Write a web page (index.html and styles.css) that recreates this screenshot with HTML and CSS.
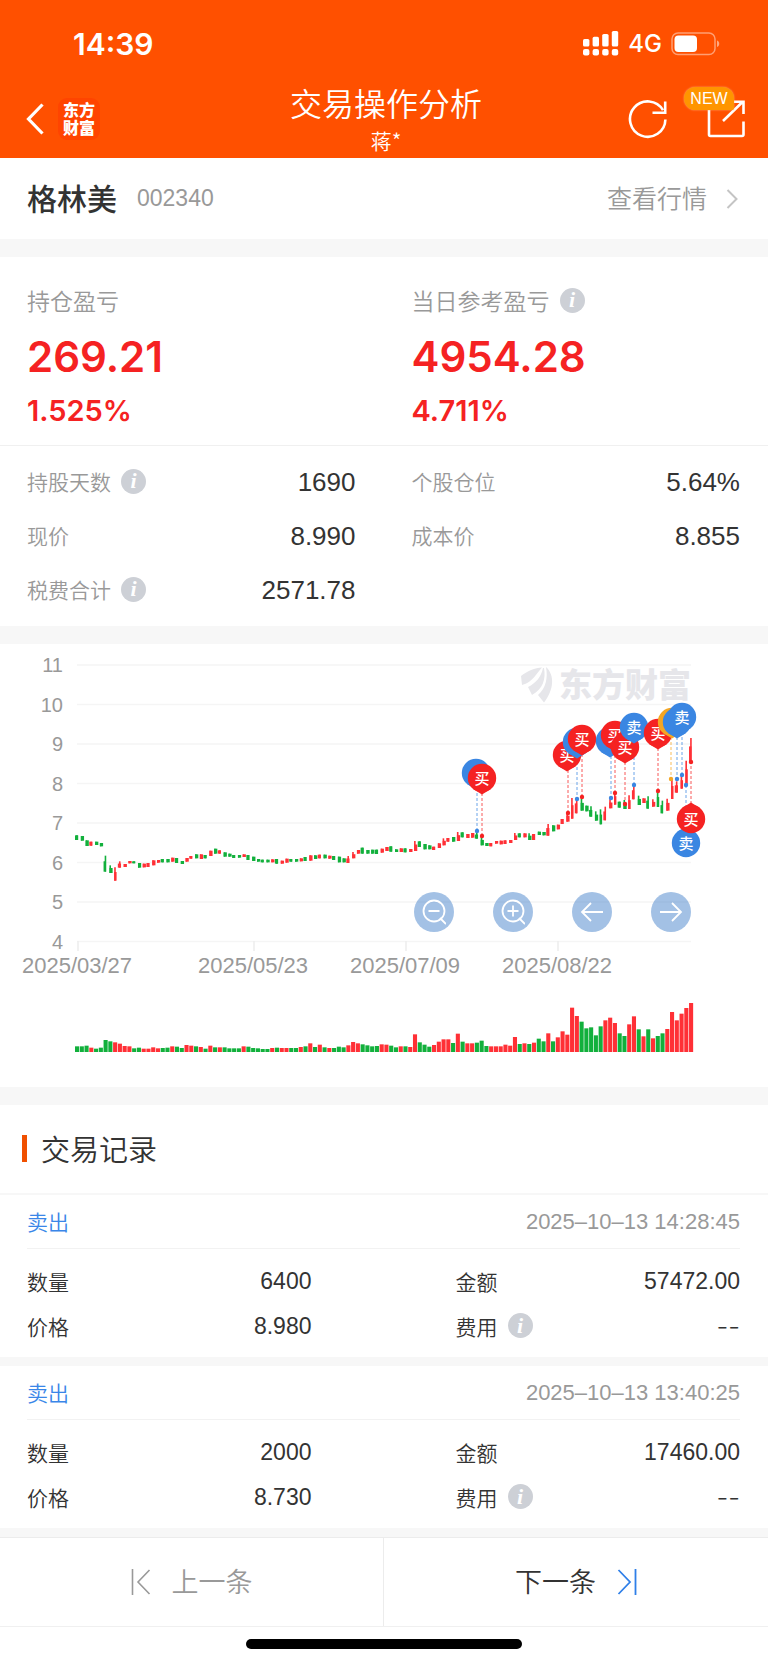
FILE: index.html
```html
<!DOCTYPE html>
<html lang="zh-CN">
<head>
<meta charset="utf-8">
<meta name="viewport" content="width=device-width, initial-scale=1">
<title>交易操作分析</title>
<link rel="stylesheet" href="styles.css">
</head>
<body>
<header class="header">
  <div class="status">
    <span class="status-time">14:39</span>
    <div class="status-right">
      <svg class="signal" width="36" height="26" viewBox="0 0 36 26" fill="#fff" aria-hidden="true">
        <rect x="0" y="8" width="6.400" height="7.500" rx="1.600"/><rect x="9.600" y="5.800" width="6.400" height="9.700" rx="1.600"/><rect x="19.200" y="3" width="6.400" height="12.500" rx="1.600"/><rect x="28.800" y="0" width="6.400" height="15.500" rx="1.600"/>
        <rect x="0" y="18" width="6.400" height="6.500" rx="2"/><rect x="9.600" y="18" width="6.400" height="6.500" rx="2"/><rect x="19.200" y="18" width="6.400" height="6.500" rx="2"/><rect x="28.800" y="18" width="6.400" height="6.500" rx="2"/>
      </svg>
      <span class="status-net">4G</span>
      <svg width="49" height="24" viewBox="0 0 49 24" aria-hidden="true">
        <rect x="1" y="1" width="43" height="21.500" rx="6" fill="none" stroke="#fff" stroke-opacity=".45" stroke-width="1.500"/>
        <rect x="3.500" y="3.500" width="22.500" height="16.500" rx="4" fill="#fff"/>
        <path d="M46 8.500c3 .8 3 5.700 0 6.500z" fill="#fff" fill-opacity=".5"/>
      </svg>
    </div>
  </div>
  <div class="topbar">
    <div class="topbar-left">
      <button class="icon-btn" type="button" aria-label="返回">
        <svg width="18" height="32" viewBox="0 0 18 32" fill="none" stroke="#fff" stroke-width="3.200"><path d="M16.500 1.500 2.500 16l14 14.500"/></svg>
      </button>
      <div class="brand"><span>东方</span><span>财富</span></div>
    </div>
    <div class="topbar-title">
      <h1>交易操作分析</h1>
      <p>蒋*</p>
    </div>
    <div class="topbar-right">
      <button class="icon-btn" type="button" aria-label="刷新">
        <svg width="40" height="40" viewBox="0 0 40 40" fill="none" stroke="#fff" stroke-width="2.600"><path d="M37.400 20.500A17.700 17.700 0 1 1 35 11.200"/><path d="M37.200 2.500v11.300H24.500"/></svg>
      </button>
      <button class="icon-btn share" type="button" aria-label="分享">
        <svg width="40" height="40" viewBox="0 0 40 40" fill="none" stroke="#fff" stroke-width="2.600"><path d="M3 8v27.500q0 1.500 1.500 1.500H36q1.500 0 1.500-1.500V22.500"/><path d="M17 22 37 2.500M27 2.800h10.500V15"/></svg>
        <span class="badge">NEW</span>
      </button>
    </div>
  </div>
</header>

<main>
  <section class="stock">
    <h2>格林美</h2><span class="code">002340</span>
    <a class="quote" href="#"><span>查看行情</span>
      <svg width="12" height="20" viewBox="0 0 12 20" fill="none" stroke="#c4c4c4" stroke-width="2"><path d="M1.500 1 10.500 10l-9 9"/></svg>
    </a>
  </section>

  <section class="card">
    <div class="summary">
      <div>
        <p class="summary-label">持仓盈亏</p>
        <p class="summary-value">269.21</p>
        <p class="summary-rate">1.525%</p>
      </div>
      <div>
        <p class="summary-label">当日参考盈亏<button class="info" type="button" aria-label="当日参考盈亏说明">i</button></p>
        <p class="summary-value">4954.28</p>
        <p class="summary-rate">4.711%</p>
      </div>
    </div>
    <dl class="metrics">
      <div class="metric"><dt>持股天数<button class="info" type="button" aria-label="持股天数说明">i</button></dt><dd>1690</dd></div>
      <div class="metric"><dt>个股仓位</dt><dd>5.64%</dd></div>
      <div class="metric"><dt>现价</dt><dd>8.990</dd></div>
      <div class="metric"><dt>成本价</dt><dd>8.855</dd></div>
      <div class="metric"><dt>税费合计<button class="info" type="button" aria-label="税费合计说明">i</button></dt><dd>2571.78</dd></div>
    </dl>
  </section>

  <section class="card chart">
    <svg id="chart" class="chart-svg" viewBox="0 0 768 443" role="img" aria-label="股价走势与买卖点"></svg>
    <div class="chart-tools">
      <button type="button" aria-label="缩小"><svg width="24" height="26" viewBox="0 0 24 26"><circle cx="12" cy="12" r="10.500"/><path d="M6.500 12h11M18 19l6 6"/></svg></button>
      <button type="button" aria-label="放大"><svg width="24" height="26" viewBox="0 0 24 26"><circle cx="12" cy="12" r="10.500"/><path d="M6.500 12h11M12 6.500v11M18 19l6 6"/></svg></button>
      <button type="button" aria-label="向左"><svg width="24" height="20" viewBox="0 0 24 20"><path d="M23 10H2M11 1 2 10l9 9"/></svg></button>
      <button type="button" aria-label="向右"><svg width="24" height="20" viewBox="0 0 24 20"><path d="M1 10h21M13 1l9 9-9 9"/></svg></button>
    </div>
  </section>

  <section class="card records">
    <h2 class="records-title">交易记录</h2>
    <article class="record">
      <header class="record-head"><span class="side">卖出</span><time>2025–10–13 14:28:45</time></header>
      <dl class="record-body">
        <div class="field"><dt>数量</dt><dd>6400</dd></div>
        <div class="field"><dt>金额</dt><dd>57472.00</dd></div>
        <div class="field"><dt>价格</dt><dd>8.980</dd></div>
        <div class="field"><dt>费用<button class="info" type="button" aria-label="费用说明">i</button></dt><dd class="empty">--</dd></div>
      </dl>
    </article>
    <article class="record">
      <header class="record-head"><span class="side">卖出</span><time>2025–10–13 13:40:25</time></header>
      <dl class="record-body">
        <div class="field"><dt>数量</dt><dd>2000</dd></div>
        <div class="field"><dt>金额</dt><dd>17460.00</dd></div>
        <div class="field"><dt>价格</dt><dd>8.730</dd></div>
        <div class="field"><dt>费用<button class="info" type="button" aria-label="费用说明">i</button></dt><dd class="empty">--</dd></div>
      </dl>
    </article>
  </section>
</main>

<nav class="pager">
  <button type="button" class="prev">
    <svg width="20" height="26" viewBox="0 0 20 26" fill="none" stroke="#999" stroke-width="1.600"><path d="M1.500 0v26M18.500 1 7 13l11.500 12"/></svg><span>上一条</span>
  </button>
  <button type="button" class="next"><span>下一条</span>
    <svg width="20" height="26" viewBox="0 0 20 26" fill="none" stroke="#2f7fe8" stroke-width="1.800"><path d="M18.500 0v26M1.500 1 13 13 1.500 25"/></svg>
  </button>
</nav>
<div class="home"><span></span></div>
<script src="chart.js"></script>
</body>
</html>
```
FILE: styles.css
```css
* { box-sizing: border-box; }

body {
  margin: 0;
  background: #fff;
  color: #333;
  font-family: "Liberation Sans", "Noto Sans CJK SC", sans-serif;
  font-size: 22px;
}

h1, h2, p, dl, dd { margin: 0; }

h1, h2, .summary-label, .quote, dt, .side, .pager button, .topbar-title p {
  font-family: "Noto Sans CJK SC", sans-serif;
  font-weight: 350;
}

button {
  padding: 0;
  border: 0;
  background: none;
  color: inherit;
  font: inherit;
  cursor: pointer;
}

svg { display: block; }

/* Header */
.header { background: #ff5000; color: #fff; }

.status {
  display: flex;
  align-items: center;
  justify-content: space-between;
  height: 80px;
  padding: 8px 48px 0 73px;
}

.status-time { font: 600 30px/1 Inter, sans-serif; }
.status-right { display: flex; align-items: center; gap: 9px; }
.status-net { font: 500 24px/1 Inter, sans-serif; }

.topbar {
  display: grid;
  grid-template-columns: 1fr auto 1fr;
  align-items: center;
  height: 78px;
  padding: 0 22px 0 26px;
}

.topbar-left { display: flex; align-items: center; gap: 14px; }

.brand {
  display: flex;
  flex-direction: column;
  align-items: center;
  justify-content: center;
  width: 42px;
  height: 42px;
  padding-bottom: 2px;
  border-radius: 9px;
  background: #ff4400;
  font: 900 16px/18px "Noto Sans CJK SC", sans-serif;
}

.topbar-title { text-align: center; }
.topbar-title h1 { font-size: 32px; line-height: 42px; }
.topbar-title p { font-size: 21px; line-height: 34px; }
.topbar-right { display: flex; justify-content: flex-end; gap: 38px; }

.share { position: relative; }

.badge {
  position: absolute;
  right: 12px;
  top: -12px;
  width: 50px;
  border-radius: 12px 12px 2px 12px;
  background: #ff9500;
  box-shadow: 0 0 2px #ffb070;
  font: 16px/23px "Liberation Sans", sans-serif;
  text-align: center;
}

/* Stock */
.stock {
  display: flex;
  align-items: center;
  height: 81px;
  padding: 0 30px 0 27px;
}

.stock h2 { padding-bottom: 3px; font-size: 30px; font-weight: 500; }
.code { margin-left: 20px; color: #999; font-size: 23px; }

.quote {
  display: flex;
  align-items: center;
  gap: 19px;
  margin-left: auto;
  color: #999;
  font-size: 25px;
  text-decoration: none;
}

.quote span, .pager span { padding-bottom: 3px; }

.card { border-top: 18px solid #f7f7f7; }

/* Profit summary */
.summary, .metrics {
  display: grid;
  grid-template-columns: 1fr 1fr;
  column-gap: 56px;
  padding: 0 28px 0 27px;
}

.summary {
  padding-top: 26px;
  padding-bottom: 16px;
  border-bottom: 1px solid #f0f0f0;
}

.summary-label {
  display: flex;
  align-items: center;
  color: #999;
  font-size: 23px;
  line-height: 34px;
}

.summary-value, .summary-rate { color: #f52222; font-family: Inter, sans-serif; font-weight: 600; }
.summary-value { margin-top: 12px; font-size: 42px; line-height: 56px; }
.summary-rate { margin-top: 8px; font-size: 29px; line-height: 36px; }

.info {
  width: 25px;
  height: 25px;
  margin-left: 10px;
  border-radius: 50%;
  background: #cdd0d6;
  color: #fff;
  font: italic bold 22px/24px "Liberation Serif", serif;
}

.metrics { padding-top: 9px; padding-bottom: 9px; }

.metric, .field { display: flex; align-items: center; justify-content: space-between; }
.metric { height: 54px; }
dt { display: flex; align-items: center; padding-bottom: 2px; font-size: 21px; }
.metric dt { color: #999; }
.metric dd { font-size: 26px; }

/* Chart */
.chart { position: relative; }
.chart-svg { width: 100%; height: auto; }
.chart-svg .grid { stroke: #f5f5f5; stroke-width: 1.5; }
.chart-svg .tick { stroke: #ececec; stroke-width: 1.5; }
.chart-svg .axis { fill: #999; font-size: 20px; }
.chart-svg .date { fill: #999; font-size: 22px; }
.chart-svg .mark { fill: #e6e6ea; font: 900 33px "Noto Sans CJK SC", sans-serif; }
.chart-svg .pin { fill: #fff; font: 500 15px "Noto Sans CJK SC", sans-serif; text-anchor: middle; }

.chart-tools {
  position: absolute;
  top: 56%;
  right: 10%;
  display: flex;
  gap: 39px;
}

.chart-tools button {
  display: grid;
  place-items: center;
  width: 40px;
  height: 40px;
  border-radius: 50%;
  background: rgba(71, 131, 203, .5);
}

.chart-tools svg { fill: none; stroke: #fff; stroke-width: 1.8; }

/* Records */
.records-title {
  display: flex;
  align-items: center;
  gap: 14px;
  height: 90px;
  padding-left: 22px;
  padding-bottom: 2px;
  border-bottom: 2px solid #f7f7f7;
  font-size: 29px;
}

.records-title::before {
  content: "";
  width: 5px;
  height: 27px;
  background: #f05000;
}

.record { padding: 0 28px 0 27px; border-bottom: 9px solid #f7f7f7; }

.record-head {
  display: flex;
  align-items: center;
  justify-content: space-between;
  height: 54px;
  border-bottom: 1px solid #f2f2f2;
}

.side { padding-bottom: 2px; color: #3a86e8; font-size: 21px; }
.record-head time { color: #999; }

.record-body {
  display: grid;
  grid-template-columns: 1fr 1fr;
  column-gap: 144px;
  padding: 10px 0 8px;
}

.field { height: 45px; }
.field dd { font-size: 23px; }
.field .empty { font: 300 26px/1 Inter, sans-serif; }

/* Pager */
.pager {
  display: grid;
  grid-template-columns: 1fr 1fr;
  height: 90px;
  border-top: 1px solid #ececec;
  border-bottom: 1px solid #f0f0f0;
}

.pager button {
  display: flex;
  align-items: center;
  justify-content: center;
  gap: 21px;
  font-size: 27px;
}

.pager .prev { border-right: 1px solid #ececec; color: #999; }

.home { display: flex; justify-content: center; padding: 12px 0 14px; }
.home span { width: 36%; height: 10px; border-radius: 5px; background: #000; }
```
FILE: chart.js
```js
(function () {
  var RED = '#ff3036', GREEN = '#12b03c';
  var PIN = { r: '#f52222', b: '#3a86e2', o: '#f5a623' };
  var STEP = 4.76, X0 = 77;

  // direction, volume, high, low (chart units, three per pixel from the top)
  var days = 'g17 574 588,g17 576 590,g19 589 606,r13 593 605,g10 593 603,g13 597 607,g36 635 683,g32 664 687,r29 670 710,r25 652 671,r18 660 669,r17 651 658,g11 652 658,g13 657 671,r10 659 670,r10 657 669,r14 649 664,r11 648 656,g12 645 655,g13 645 655,r17 641 653,g16 642 657,g12 651 660,r21 642 653,r19 636 644,g17 631 643,r15 631 645,g10 633 643,r19 620 636,g14 614 629,r14 619 629,g14 625 638,g11 629 638,g11 633 642,g11 633 641,r17 631 639,g16 633 648,g12 638 651,g11 645 653,g9 647 655,g9 647 655,r12 646 655,g13 645 659,r12 650 659,r12 644 656,g12 645 653,g12 645 653,r15 643 652,g17 639 651,r26 634 650,g15 634 645,r22 632 643,g14 632 643,r12 635 644,g12 636 648,g16 638 655,g14 643 655,r20 636 657,r30 624 643,r26 618 629,g23 611 629,g20 618 629,g17 617 629,g18 617 630,r23 614 626,r22 609 621,g19 607 623,g14 616 624,r17 613 624,g17 613 625,r15 615 624,r53 591 621,g29 592 609,g22 600 616,g16 604 616,r21 608 618,r31 598 612,r38 583 604,r38 582 593,g27 579 593,r55 564 591,g31 565 580,r26 570 582,r26 567 581,g28 565 584,g34 579 604,g18 597 606,r17 597 607,r17 591 599,r17 590 601,r22 589 600,r19 588 597,r45 567 588,g24 568 580,r26 568 580,g24 568 588,r28 570 588,g40 563 573,g32 564 574,r56 540 575,g32 544 562,r44 542 556,r62 525 540,r52 505 533,r133 462 524,r108 462 508,g91 464 500,g71 485 502,g74 487 518,g50 502 530,g77 496 541,r95 488 529,r103 466 493,r87 443 482,g56 473 491,g48 468 495,r83 454 495,r107 424 466,g68 455 483,r47 463 477,g68 457 494,r41 466 488,g48 443 489,g56 470 508,r69 464 500,r120 405 465,r95 412 446,r115 395 434,r132 350 424,r147 282 354'.split(',');

  // colour, label, bubble x, bubble y, stem x, dot y
  var pins = [
    ['b', '', 476, 129, 477, 187], ['r', '买', 482, 134, 482, 192],
    ['r', '买', 567, 111, 568, 169], ['b', '', 577, 98, 577, 155],
    ['r', '买', 582, 95, 582, 153], ['b', '', 610, 97, 611, 154],
    ['r', '买', 615, 91, 615, 149], ['r', '买', 625, 103, 625, 160],
    ['b', '卖', 634, 83, 634, 141], ['r', '买', 658, 89, 658, 147],
    ['o', '', 672, 78, 671, 135], ['b', '', 677, 78, 677, 135],
    ['b', '卖', 682, 73, 682, 131], ['b', '卖', 686, 199, 686, 141],
    ['r', '买', 691, 175, 691, 118]
  ];

  var out = [];
  function add(s) { out.push(s); }

  for (var p = 11; p >= 4; p--) {
    var gy = 21 + (11 - p) * 39.5;
    add('<path class="grid" d="M77 ' + gy + 'H691"/>');
    add('<text class="axis" text-anchor="end" x="63" y="' + (gy + 7) + '">' + p + '</text>');
  }
  [[78, '2025/03/27'], [254, '2025/05/23'], [406, '2025/07/09'], [558, '2025/08/22']].forEach(function (t) {
    add('<path class="tick" d="M' + t[0] + ' 297v10"/>');
    add('<text class="date" text-anchor="middle" x="' + (t[0] - 1) + '" y="329">' + t[1] + '</text>');
  });

  add('<g fill="#e6e6ea"><path d="M521 32C527 27 535 24 542 23.500C536 30 533 38 522 41z"/><path d="M543 24C541 33 536 39 528 43L532 51C543 45 546 35 544 24z"/><path d="M546 23C555 31 554 46 544 58.500L538 51C546 44 548 34 546 23z"/></g>');
  add('<text class="mark" x="559" y="53">东方财富</text>');

  days.forEach(function (d, i) {
    var f = d.slice(1).split(' ').map(Number);
    var x = X0 + i * STEP, top = f[1] / 3, h = (f[2] - f[1]) / 3;
    var c = d[0] === 'r' ? RED : GREEN;
    var cut = h > 6 ? h * 0.35 : 0;
    add('<path fill="' + c + '" d="M' + (x - 0.9) + ' ' + top + 'h1.600v' + h + 'h-1.600z"/>');
    add('<rect fill="' + c + '" x="' + (i % 3 ? x - 0.9 : x - 2) + '" y="' + (top + cut) + '" width="' + (h > 12 ? 2.400 : 3.200) + '" height="' + (h - cut) + '"/>');
    add('<rect fill="' + c + '" x="' + (x - 2) + '" y="' + (408 - f[0] / 3) + '" width="4.100" height="' + f[0] / 3 + '"/>');
  });

  pins.forEach(function (n) {
    var c = PIN[n[0]];
    add('<path stroke="' + c + '" stroke-opacity=".75" stroke-dasharray="3 2" d="M' + n[4] + ' ' + n[3] + 'V' + n[5] + '"/>');
    add('<circle fill="' + c + '" cx="' + n[4] + '" cy="' + n[5] + '" r="2.200"/>');
  });
  pins.forEach(function (n) {
    var c = PIN[n[0]], dir = n[5] > n[3] ? 1 : -1, x = n[2], y = n[3];
    add('<circle fill="' + c + '" cx="' + x + '" cy="' + y + '" r="14.200"/>');
    add('<path fill="' + c + '" d="M' + (x - 9) + ' ' + (y + 11 * dir) + 'L' + x + ' ' + (y + 16.500 * dir) + 'L' + (x + 9) + ' ' + (y + 11 * dir) + 'z"/>');
    if (n[1]) add('<text class="pin" x="' + x + '" y="' + (y + 6) + '">' + n[1] + '</text>');
  });

  document.getElementById('chart').innerHTML = out.join('');
})();
```
